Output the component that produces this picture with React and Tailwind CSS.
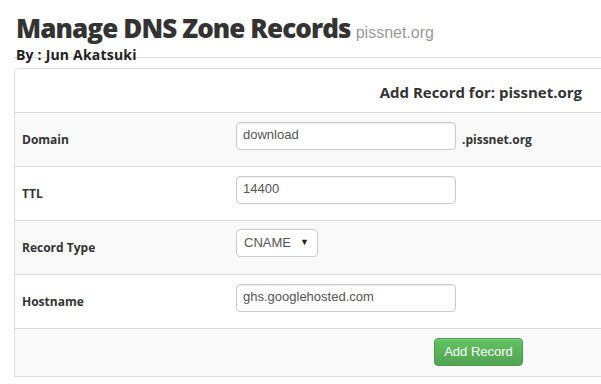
import React from "react";

const rows = [
  { label: "Domain", kind: "input", value: "download", suffix: ".pissnet.org", bg: "bg-[#f9f9f9]" },
  { label: "TTL", kind: "input", value: "14400", bg: "bg-white" },
  { label: "Record Type", kind: "select", value: "CNAME", bg: "bg-[#f9f9f9]" },
  { label: "Hostname", kind: "input", value: "ghs.googlehosted.com", bg: "bg-white" },
];

function Field({ row }) {
  if (row.kind === "select") {
    return (
      <div className="flex h-[28px] w-[82px] items-center justify-between rounded-[4px] border border-[#ccc] bg-white pl-[7px] pr-[8px] font-['Liberation_Sans',Arial,sans-serif] text-[13px] text-[#555]">
        <span>{row.value}</span>
        <span className="text-[9px] text-[#222]">▼</span>
      </div>
    );
  }
  return (
    <input
      readOnly
      value={row.value}
      className="h-[28px] w-[220px] rounded-[4px] border border-[#ccc] bg-white px-[6px] pb-[2px] font-['Liberation_Sans',Arial,sans-serif] text-[13px] text-[#555] shadow-[inset_0_1px_1px_rgba(0,0,0,0.075)] outline-none"
    />
  );
}

export default function App() {
  return (
    <div className="h-[384px] w-[601px] overflow-hidden bg-white font-['Open_Sans',sans-serif] text-[#333]">
      {/* page heading */}
      <div className="pl-[16px] pt-[10px]">
        <h1 className="h-[36px] whitespace-nowrap text-[26px] font-extrabold leading-[36px] tracking-[-0.9px] text-[#333]">
          Manage DNS Zone Records
          <span className="ml-[5px] font-['Liberation_Sans',Arial,sans-serif] text-[16px] font-normal leading-none tracking-normal text-[#999]">
            pissnet.org
          </span>
        </h1>
        <div className="h-[18px] text-[14px] font-bold leading-[18px] tracking-[0.2px] text-[#222]">By : Jun Akatsuki</div>
      </div>
      <div className="-mt-[7px] ml-[14px] h-px bg-[#ddd]"></div>

      <div className="ml-[14px] mt-[10px] w-[596px] rounded-tl-[4px] border border-[#ddd]">
        <div className="flex h-[43px] items-center justify-end pr-[27px] pt-[4px] text-[15px] font-bold">
          Add Record for: pissnet.org
        </div>

        {rows.map((row) => (
          <div key={row.label} className={`flex h-[54px] border-t border-[#ddd] ${row.bg}`}>
            <div className="flex w-[221px] items-center pl-[7px] text-[12px] font-bold">{row.label}</div>
            <div className="pt-[8px]">
              <Field row={row} />
            </div>
            {row.suffix && (
              <div className="ml-[6px] flex items-center text-[12px] font-bold text-[#333]">{row.suffix}</div>
            )}
          </div>
        ))}

        <div className="flex h-[48px] border-t border-[#ddd] bg-[#f9f9f9] pl-[419px] pt-[9px]">
          <button className="h-[28px] w-[89px] rounded-[4px] border border-[#4a9a4a] bg-gradient-to-b from-[#62c462] to-[#51a351] font-['Liberation_Sans',Arial,sans-serif] text-[13px] text-white shadow-[inset_0_1px_0_rgba(255,255,255,0.2)]">
            Add Record
          </button>
        </div>
      </div>
    </div>
  );
}
